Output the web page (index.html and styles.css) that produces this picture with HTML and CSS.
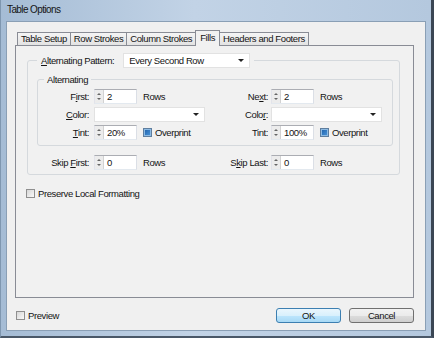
FILE: index.html
```html
<!DOCTYPE html>
<html>
<head>
    <title>Table Options</title>
    <link rel="stylesheet" href="styles.css">
</head>
<body>
    <div class="window">
        <div class="titlebar">Table Options</div>
        <div class="client">
            <div class="tabs">
                <div class="tab">Table Setup</div>
                <div class="tab">Row Strokes</div>
                <div class="tab">Column Strokes</div>
                <div class="tab active">Fills</div>
                <div class="tab">Headers and Footers</div>
            </div>
            <div class="panel">
                <fieldset class="group outer">
                    <legend>
                        <span><u>A</u>lternating Pattern:</span>
                        <div class="select wide">Every Second Row</div>
                    </legend>
                    <fieldset class="group inner">
                        <legend>Alternating</legend>
                        <div class="row">
                            <div class="cell first">
                                <span class="label">F<u>i</u>rst:</span>
                                <div class="spin"><span class="arrows"></span><span class="val">2</span></div>
                                <span class="unit">Rows</span>
                            </div>
                            <div class="cell second">
                                <span class="label">Ne<u>x</u>t:</span>
                                <div class="spin"><span class="arrows"></span><span class="val">2</span></div>
                                <span class="unit">Rows</span>
                            </div>
                        </div>
                        <div class="row">
                            <div class="cell first">
                                <span class="label"><u>C</u>olor:</span>
                                <div class="select"></div>
                            </div>
                            <div class="cell second">
                                <span class="label">Colo<u>r</u>:</span>
                                <div class="select"></div>
                            </div>
                        </div>
                        <div class="row">
                            <div class="cell first">
                                <span class="label"><u>T</u>int:</span>
                                <div class="spin"><span class="arrows"></span><span class="val">20%</span></div>
                                <span class="check on"></span>
                                <span class="check-text">Overprint</span>
                            </div>
                            <div class="cell second">
                                <span class="label">Tint:</span>
                                <div class="spin"><span class="arrows"></span><span class="val">100%</span></div>
                                <span class="check on"></span>
                                <span class="check-text">Overprint</span>
                            </div>
                        </div>
                    </fieldset>
                    <div class="row skip">
                        <div class="cell first">
                            <span class="label">Skip <u>F</u>irst:</span>
                            <div class="spin"><span class="arrows"></span><span class="val">0</span></div>
                            <span class="unit">Rows</span>
                        </div>
                        <div class="cell second">
                            <span class="label">S<u>k</u>ip Last:</span>
                            <div class="spin"><span class="arrows"></span><span class="val">0</span></div>
                            <span class="unit">Rows</span>
                        </div>
                    </div>
                </fieldset>
                <div class="option">
                    <span class="check"></span>
                    <span class="check-text">Preserve Local Formatting</span>
                </div>
            </div>
            <div class="footer">
                <span class="check"></span>
                <span class="check-text">Preview</span>
                <div class="buttons">
                    <button class="btn default">OK</button>
                    <button class="btn">Cancel</button>
                </div>
            </div>
        </div>
    </div>
</body>
</html>
```

FILE: styles.css
```css
* {
    box-sizing: border-box;
}
body {
    margin: 0;
    font-family: "Liberation Sans", Arial, sans-serif;
    font-size: 9.5px;
    letter-spacing: -0.4px;
    color: #141414;
}
.window {
    width: 434px;
    height: 338px;
    display: flex;
    flex-direction: column;
    padding: 0 5px 5px 5px;
    background: linear-gradient(90deg, #a5bcd5, #c2d3e6 45%, #b4c8de);
    border-left: 1px solid #7f97b0;
    border-right: 3px solid #3b4654;
    border-bottom: 2px solid #4a5868;
}
.titlebar {
    height: 21px;
    line-height: 20px;
    padding-left: 1px;
    font-size: 10px;
    letter-spacing: -0.6px;
    color: #141414;
}
.client {
    flex: 1;
    display: flex;
    flex-direction: column;
    background: #f0f0f0;
    border: 1px solid #8a9fb5;
    padding: 8px 11px 0 8px;
}
.tabs {
    display: flex;
    align-items: flex-end;
    height: 16px;
    margin: 0 0 -1px 2px;
    position: relative;
    z-index: 1;
}
.tab {
    height: 13px;
    margin: 0 -1px 1px 0;
    padding: 0 3px;
    line-height: 12px;
    border: 1px solid #898c95;
    border-bottom: none;
    background: linear-gradient(#f5f5f5, #e3e3e3);
}
.tab.active {
    height: 16px;
    margin-bottom: 0;
    padding: 0 4px;
    line-height: 13px;
    background: #f1f1f1;
    position: relative;
    z-index: 1;
}
.panel {
    height: 253px;
    border: 1px solid #898c95;
    background: #f1f1f1;
}
.group {
    margin: 0;
    padding: 0;
    min-width: 0;
    border: 1px solid #d5d9dd;
    border-radius: 3px;
}
.outer {
    margin: 7px 13px 0 11px;
    padding: 0 0 3px 0;
}
.outer > legend {
    display: flex;
    align-items: center;
    gap: 9px;
    margin-left: 9px;
    padding: 0 4px;
}
.inner {
    margin: 5px 6px 0 9px;
    padding: 1px 0 4px 0;
}
.inner > legend {
    margin-left: 6px;
    padding: 0 3px;
    line-height: 13px;
}
.row {
    display: flex;
    align-items: center;
    height: 18px;
}
.row.skip {
    margin-top: 7px;
}
.cell {
    display: flex;
    align-items: center;
}
.cell.first {
    width: 177px;
}
.skip .cell.first {
    width: 187px;
}
.label {
    width: 51px;
    margin-right: 5px;
    text-align: right;
}
.skip .first .label {
    width: 61px;
}
.cell.second .label {
    width: 53px;
    margin-right: 3px;
}
.spin {
    display: flex;
    width: 43px;
    height: 15px;
    background: #fff;
    border: 1px solid #abadb3;
    border-color: #abadb3 #dbdfe6 #e3e9ef #e2e3ea;
}
.arrows {
    width: 9px;
    display: flex;
    flex-direction: column;
    align-items: center;
    justify-content: center;
    gap: 3px;
    background: #ececec;
    border-right: 1px solid #d2d2d2;
}
.arrows::before,
.arrows::after {
    content: "";
    border-left: 2px solid transparent;
    border-right: 2px solid transparent;
}
.arrows::before {
    border-bottom: 2px solid #666;
}
.arrows::after {
    border-top: 2px solid #666;
}
.val {
    padding-left: 3px;
    line-height: 13px;
}
.unit {
    margin-left: 6px;
}
.select {
    position: relative;
    width: 111px;
    height: 15px;
    padding-left: 5px;
    line-height: 13px;
    background: #fff;
    border: 1px solid #e2e2e2;
}
.select.wide {
    width: 127px;
}
.select::after {
    content: "";
    position: absolute;
    right: 5px;
    top: 5px;
    border-left: 3px solid transparent;
    border-right: 3px solid transparent;
    border-top: 3px solid #222;
}
.check {
    width: 9px;
    height: 9px;
    margin-left: 6px;
    border: 1px solid #8f8f8f;
    background: linear-gradient(135deg, #d6d6d6, #fafafa);
}
.check.on {
    border-color: #5f7e9e;
    background: linear-gradient(135deg, #1f5fa8, #4b97dc);
    box-shadow: inset 0 0 0 1px #8dbbe4;
}
.check-text {
    margin-left: 3px;
}
.option {
    display: flex;
    align-items: center;
    height: 14px;
    margin: 11px 0 0 4px;
}
.footer {
    display: flex;
    align-items: center;
    height: 15px;
    margin-top: 10px;
}
.footer > .check {
    margin-left: 1px;
}
.buttons {
    display: flex;
    gap: 8px;
    margin-left: auto;
}
.btn {
    width: 65px;
    height: 15px;
    padding: 0;
    font: inherit;
    letter-spacing: inherit;
    color: #141414;
    border: 1px solid #707070;
    border-radius: 3px;
    background: linear-gradient(#f2f2f2 0%, #ebebeb 50%, #dddddd 50%, #cfcfcf 100%);
}
.btn.default {
    border-color: #3c7fb1;
    background: linear-gradient(#eaf6fd 0%, #d9f0fc 50%, #bee6fd 50%, #a7d9f5 100%);
}
```
